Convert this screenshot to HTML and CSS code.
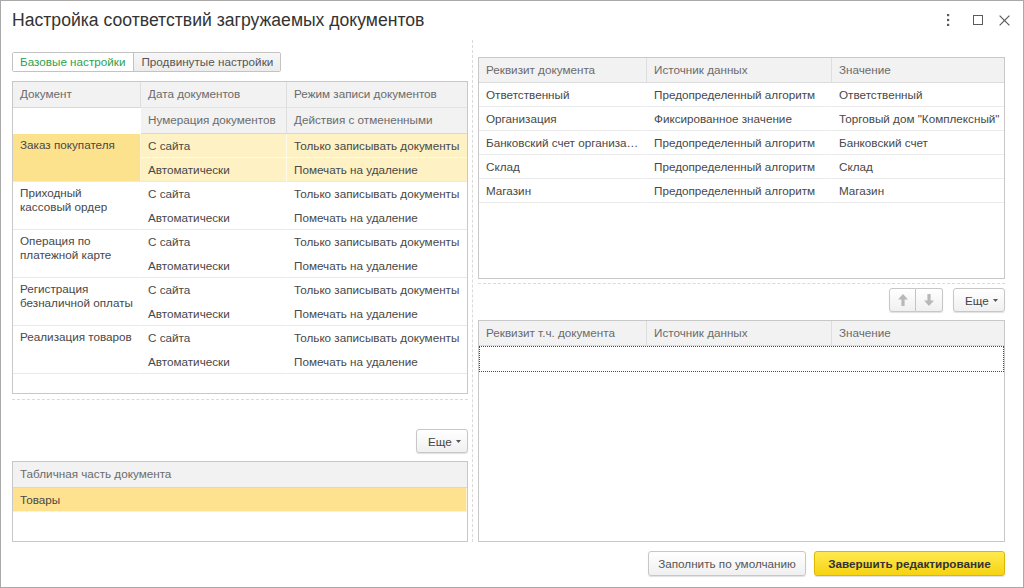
FILE: index.html
```html
<!DOCTYPE html>
<html lang="ru">
<head>
<meta charset="utf-8">
<title>Настройка соответствий загружаемых документов</title>
<link rel="stylesheet" href="styles.css">
</head>
<body>
<div class="window">
  <header class="titlebar">
    <h1 class="title">Настройка соответствий загружаемых документов</h1>
    <div class="win-actions">
      <span class="wicon kebab"><svg width="4" height="12" viewBox="0 0 4 12"><rect x="1" y="0" width="2.2" height="2.2"/><rect x="1" y="4.9" width="2.2" height="2.2"/><rect x="1" y="9.8" width="2.2" height="2.2"/></svg></span>
      <span class="wicon square"><svg width="10" height="10" viewBox="0 0 10 10"><rect x="0.5" y="0.5" width="9" height="9" fill="none" stroke="#5a5a5a" stroke-width="1"/></svg></span>
      <span class="wicon close"><svg width="11" height="11" viewBox="0 0 11 11"><path d="M0.6 0.6 L10.4 10.4 M10.4 0.6 L0.6 10.4" stroke="#5a5a5a" stroke-width="1.2" fill="none"/></svg></span>
    </div>
  </header>

  <main class="content">
    <section class="pane-left">
      <div class="tabs">
        <div class="tab active">Базовые настройки</div>
        <div class="tab">Продвинутые настройки</div>
      </div>

      <div class="grid docs">
        <div class="h h-doc">Документ</div>
        <div class="h">Дата документов</div>
        <div class="h last">Режим записи документов</div>
        <div class="h h2">Нумерация документов</div>
        <div class="h h2 last">Действия с отмененными</div>

        <div class="c doc sel-doc">Заказ покупателя</div>
        <div class="c r1 sel">С сайта</div>
        <div class="c r1 last sel">Только записывать документы</div>
        <div class="c r2 sel">Автоматически</div>
        <div class="c r2 last sel">Помечать на удаление</div>

        <div class="c doc">Приходный кассовый ордер</div>
        <div class="c r1">С сайта</div>
        <div class="c r1 last">Только записывать документы</div>
        <div class="c r2">Автоматически</div>
        <div class="c r2 last">Помечать на удаление</div>

        <div class="c doc">Операция по платежной карте</div>
        <div class="c r1">С сайта</div>
        <div class="c r1 last">Только записывать документы</div>
        <div class="c r2">Автоматически</div>
        <div class="c r2 last">Помечать на удаление</div>

        <div class="c doc">Регистрация безналичной оплаты</div>
        <div class="c r1">С сайта</div>
        <div class="c r1 last">Только записывать документы</div>
        <div class="c r2">Автоматически</div>
        <div class="c r2 last">Помечать на удаление</div>

        <div class="c doc">Реализация товаров</div>
        <div class="c r1">С сайта</div>
        <div class="c r1 last">Только записывать документы</div>
        <div class="c r2">Автоматически</div>
        <div class="c r2 last">Помечать на удаление</div>
      </div>

      <div class="hsep hsep-left"></div>

      <div class="toolbar">
        <button class="btn more">Еще<svg class="caret" width="5" height="3" viewBox="0 0 5 3"><path d="M0 0 H5 L2.5 3 Z"/></svg></button>
      </div>

      <div class="grid parts">
        <div class="h last">Табличная часть документа</div>
        <div class="c part-row">Товары</div>
      </div>
    </section>

    <div class="vsep"></div>

    <section class="pane-right">
      <div class="grid attrs">
        <div class="h">Реквизит документа</div>
        <div class="h">Источник данных</div>
        <div class="h last">Значение</div>

        <div class="c row">Ответственный</div>
        <div class="c row">Предопределенный алгоритм</div>
        <div class="c row last">Ответственный</div>

        <div class="c row">Организация</div>
        <div class="c row">Фиксированное значение</div>
        <div class="c row last">Торговый дом "Комплексный"</div>

        <div class="c row">Банковский счет организации</div>
        <div class="c row">Предопределенный алгоритм</div>
        <div class="c row last">Банковский счет</div>

        <div class="c row">Склад</div>
        <div class="c row">Предопределенный алгоритм</div>
        <div class="c row last">Склад</div>

        <div class="c row">Магазин</div>
        <div class="c row">Предопределенный алгоритм</div>
        <div class="c row last">Магазин</div>
      </div>

      <div class="hsep hsep-right"></div>

      <div class="toolbar">
        <div class="btn-group">
          <button class="btn arrow-btn" aria-label="Вверх"><svg width="10" height="12" viewBox="0 0 10 12"><path d="M5 0 L10 5.5 H6.6 V12 H3.4 V5.5 H0 Z"/></svg></button>
          <button class="btn arrow-btn" aria-label="Вниз"><svg width="10" height="12" viewBox="0 0 10 12"><path d="M5 12 L10 6.5 H6.6 V0 H3.4 V6.5 H0 Z"/></svg></button>
        </div>
        <button class="btn more">Еще<svg class="caret" width="5" height="3" viewBox="0 0 5 3"><path d="M0 0 H5 L2.5 3 Z"/></svg></button>
      </div>

      <div class="grid attrs attrs2">
        <div class="h">Реквизит т.ч. документа</div>
        <div class="h">Источник данных</div>
        <div class="h last">Значение</div>
        <div class="focus-row"></div>
      </div>
    </section>
  </main>

  <footer class="footer">
    <button class="btn fbtn">Заполнить по умолчанию</button>
    <button class="btn fbtn primary">Завершить редактирование</button>
  </footer>
</div>
</body>
</html>
```

FILE: styles.css
```css
* { box-sizing: border-box; }

html, body {
  margin: 0;
  padding: 0;
  background: #fff;
}

body {
  font-family: "Liberation Sans", Arial, sans-serif;
  font-size: 11.7px;
  color: #444;
}

.window {
  width: 1024px;
  height: 588px;
  border: 1px solid #a9a9a9;
  background: #fff;
  display: flex;
  flex-direction: column;
  overflow: hidden;
}

/* ---------- title bar ---------- */
.titlebar {
  height: 39px;
  flex: none;
  display: flex;
  align-items: flex-start;
  justify-content: space-between;
  padding: 9px 13px 0 11px;
}

.title {
  margin: 0;
  font-size: 17.6px;
  line-height: 20px;
  font-weight: normal;
  color: #333;
  white-space: nowrap;
}

.win-actions {
  display: flex;
  align-items: center;
  height: 20px;
}

.wicon {
  display: flex;
  align-items: center;
  fill: #5a5a5a;
}

.kebab { margin-right: 23px; }
.square { margin-right: 16px; }

/* ---------- main content ---------- */
.content {
  height: 502px;
  flex: none;
  display: flex;
  padding: 0 18px 0 11px;
}

.pane-left {
  width: 456px;
  flex: none;
  display: flex;
  flex-direction: column;
  padding-top: 12px;
}

.vsep {
  width: 5px;
  margin-right: 5px;
  flex: none;
  border-right: 1px dashed #dadada;
}

.pane-right {
  flex: 1;
  display: flex;
  flex-direction: column;
  padding-top: 17px;
}

/* ---------- tabs ---------- */
.tabs {
  display: flex;
  align-self: flex-start;
  height: 20px;
  border: 1px solid #c3c3c3;
  border-radius: 2px;
  overflow: hidden;
}

.tab {
  padding: 0 7px;
  line-height: 18px;
  color: #555;
  background: linear-gradient(#f7f7f7, #ececec);
  white-space: nowrap;
}

.tab + .tab {
  border-left: 1px solid #c3c3c3;
}

.tab.active {
  padding: 0 8px 0 7px;
  background: #fff;
  color: #2f9f4c;
}

/* ---------- grids (tables) ---------- */
.grid {
  display: grid;
  align-content: start;
  border: 1px solid #c8c8c8;
  background: #fff;
  overflow: hidden;
}

.h {
  height: 26px;
  line-height: 24px;
  padding: 0 7px;
  background: #f2f2f2;
  color: #6b6b6b;
  border-right: 1px solid #dedede;
  border-bottom: 1px solid #e3e3e3;
  white-space: nowrap;
  overflow: hidden;
  text-overflow: ellipsis;
}

.h.last { border-right: none; }

.c {
  padding: 0 7px;
  color: #484848;
  white-space: nowrap;
  overflow: hidden;
  text-overflow: ellipsis;
  border-right: 1px solid rgba(255, 255, 255, 0.65);
}

.c.last { border-right: none; }

/* left documents table */
.docs {
  margin-top: 9px;
  height: 313px;
  flex: none;
  grid-template-columns: 128px 146px 1fr;
}

.docs .h-doc {
  grid-row: span 2;
  border-bottom-color: #d8d8d8;
}

.docs .h2 {
  border-bottom-color: #d8d8d8;
}

.docs .doc {
  grid-row: span 2;
  padding-top: 4px;
  line-height: 14px;
  white-space: normal;
  border-bottom: 1px solid #e9e9e9;
}

.docs .r1 {
  height: 24px;
  line-height: 23px;
  border-bottom: 1px solid rgba(255, 255, 255, 0.6);
}

.docs .r2 {
  height: 24px;
  line-height: 23px;
  border-bottom: 1px solid #e9e9e9;
}

.docs .last {
  padding-right: 3px;
}

.docs .sel-doc { background: #fde28e; }
.docs .sel { background: #fef1c3; }

/* left tabular part table */
.parts {
  margin-top: 8px;
  flex: 1;
  grid-template-columns: 1fr;
}

.parts .h {
  border-bottom-color: #d8d8d8;
}

.part-row {
  height: 24px;
  line-height: 23px;
  background: #fee28f;
  border-bottom: 1px solid #fdf3cf;
}

/* right attribute tables */
.attrs {
  height: 222px;
  flex: none;
  grid-template-columns: 168px 185px 1fr;
}

.attrs .h {
  height: 25px;
  line-height: 23px;
  border-bottom-color: #dcdcdc;
}

.attrs .row {
  height: 24px;
  line-height: 23px;
  border-bottom: 1px solid #ececec;
}

.attrs .row.last {
  padding-right: 3px;
}

.attrs2 {
  height: auto;
  flex: 1;
  margin-top: 8px;
}

.focus-row {
  grid-column: 1 / -1;
  height: 26px;
  border: 1px dotted #4a4a4a;
}

/* ---------- separators ---------- */
.hsep {
  height: 0;
  border-top: 1px dashed #dadada;
  flex: none;
}

.hsep-left { margin: 5px 0 29px; }
.hsep-right { margin: 4px 0 4px; }

/* ---------- toolbars & buttons ---------- */
.toolbar {
  display: flex;
  justify-content: flex-end;
  gap: 10px;
  height: 24px;
  flex: none;
}

.btn {
  font: inherit;
  height: 24px;
  margin: 0;
  padding: 0 12px;
  display: inline-flex;
  align-items: center;
  justify-content: center;
  border: 1px solid #c7c7c7;
  border-radius: 3px;
  background: linear-gradient(#ffffff, #f0f0f0);
  box-shadow: 0 1px 1px rgba(0, 0, 0, 0.12);
  color: #444;
  white-space: nowrap;
}

.more {
  width: 52px;
  padding: 0 6px 0 11px;
  justify-content: space-between;
}

.caret { fill: #555; }

.btn-group {
  display: flex;
}

.arrow-btn {
  width: 27px;
  padding: 0;
  fill: #b8b8b8;
}

.arrow-btn:first-child {
  border-radius: 3px 0 0 3px;
}

.arrow-btn + .arrow-btn {
  border-left: none;
  border-radius: 0 3px 3px 0;
}

/* ---------- footer ---------- */
.footer {
  flex: 1;
  display: flex;
  justify-content: flex-end;
  align-items: flex-start;
  gap: 8px;
  padding: 9px 18px 0 0;
}

.fbtn {
  height: 25px;
  width: 158px;
  padding: 0;
  color: #555;
}

.primary {
  width: 191px;
  font-weight: bold;
  color: #333;
  border-color: #dcb800;
  background: linear-gradient(#ffea4f, #f6d312);
}
```
